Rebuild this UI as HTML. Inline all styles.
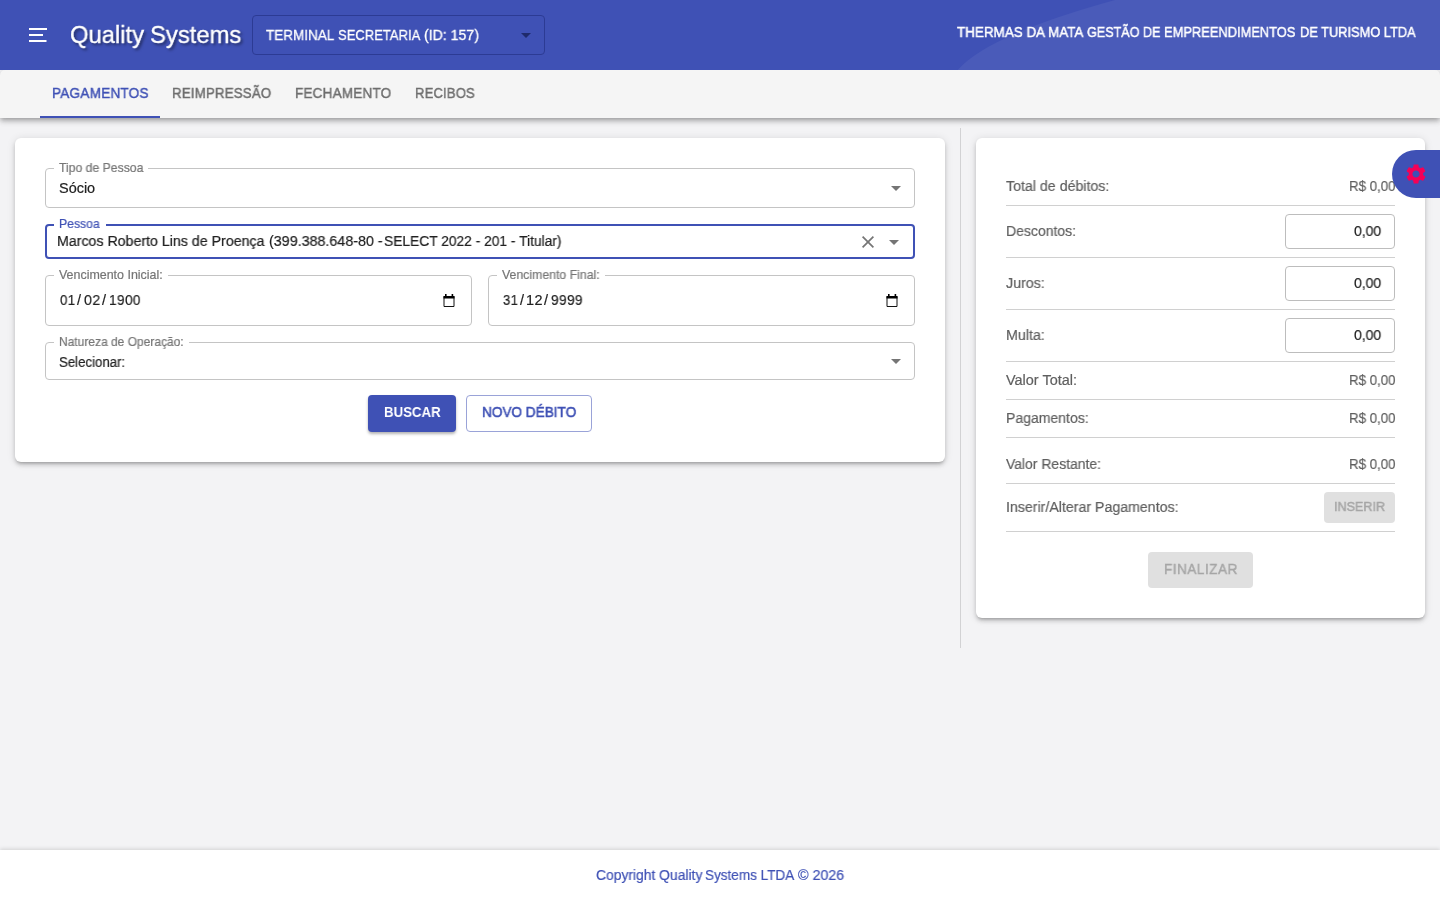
<!DOCTYPE html>
<html lang="pt-br">
<head>
<meta charset="utf-8">
<title>Quality Systems</title>
<style>
*{box-sizing:border-box;margin:0;padding:0}
html,body{width:1440px;height:900px;overflow:hidden}
body{font-family:"Liberation Sans",sans-serif;background:#f3f3f5;position:relative;color:#222}
.abs{position:absolute}
.t{position:absolute;white-space:nowrap;line-height:1;transform-origin:0 50%;will-change:transform}
/* header */
#hdr{left:0;top:0;width:1440px;height:70px;background:#3f51b5;overflow:hidden}
#term{left:252px;top:15px;width:293px;height:40px;border:1px solid #2c3b94;border-radius:4px}
/* tabs */
#tabs{clip-path:inset(0 0 -20px 0);left:0;top:70px;width:1440px;height:48px;background:#f5f5f5;border-radius:5px 5px 0 0;box-shadow:0 2px 4px -1px rgba(0,0,0,.2),0 4px 5px 0 rgba(0,0,0,.14),0 1px 10px 0 rgba(0,0,0,.12)}
#ink{left:40px;top:116px;width:120px;height:2px;background:#3f51b5}
/* cards */
.card{background:#fff;border-radius:6px;box-shadow:0 3px 3px -2px rgba(0,0,0,.2),0 3px 4px 0 rgba(0,0,0,.14),0 1px 8px 0 rgba(0,0,0,.12)}
.fld{border:1px solid #c4c4c4;border-radius:4px;background:#fff}
.line{height:1px;background:#d0d0d0;left:1006px;width:389px}
.inp{left:1285px;width:110px;height:34.7px;border:1px solid #bdbdbd;border-radius:4px;background:#fff}
.btn{border-radius:4px;text-align:center;font-size:14px}
</style>
</head>
<body>
<!-- header -->
<div id="hdr" class="abs">
  <svg class="abs" style="left:900px;top:0" width="540" height="70" viewBox="0 0 540 70"><path d="M215 0 Q88 35 57.7 70 L540 70 L540 0 Z" fill="#4a5bb9"/></svg>
  <svg class="abs" style="left:26px;top:23px" width="24" height="24" viewBox="0 0 24 24"><path d="M3 6h18M3 12h14M3 18h17.5" stroke="#fff" stroke-width="2" fill="none"/></svg>
  <div id="term" class="abs"></div>
  <svg class="abs" style="left:521px;top:33px" width="10" height="6" viewBox="0 0 10 6"><path d="M0 0h10L5 5z" fill="#1f2a6b"/></svg>
</div>
<!-- tabs -->
<div id="tabs" class="abs"></div>

<div id="ink" class="abs"></div>

<!-- left card -->
<div class="abs card" style="left:15px;top:138px;width:930px;height:324px"></div>
<div class="abs fld" style="left:45px;top:168px;width:870px;height:40px"></div>

<div class="abs" style="left:54px;top:167px;width:94px;height:3px;background:#fff"></div>
<div class="abs fld" style="left:45px;top:224px;width:870px;height:35px;border:2px solid #3f51b5"></div>

<div class="abs" style="left:54px;top:223px;width:52px;height:4px;background:#fff"></div>
<div class="abs fld" style="left:45px;top:275px;width:427px;height:51px"></div>

<div class="abs" style="left:54px;top:274px;width:114px;height:3px;background:#fff"></div>
<div class="abs fld" style="left:488px;top:275px;width:427px;height:51px"></div>

<div class="abs" style="left:497px;top:274px;width:108px;height:3px;background:#fff"></div>
<div class="abs fld" style="left:45px;top:342px;width:870px;height:38px"></div>

<div class="abs" style="left:54px;top:341px;width:135px;height:3px;background:#fff"></div>
<div class="abs btn" style="left:368px;top:395px;width:88px;height:37px;background:#3f51b5;box-shadow:0 2px 3px rgba(0,0,0,.3)"></div>

<div class="abs btn" style="left:466px;top:395px;width:126px;height:37px;border:1px solid #9aa3d8;background:#fff"></div>

<!-- divider -->
<div class="abs" style="left:960px;top:128px;width:1px;height:520px;background:#d2d2d4"></div>

<!-- right card -->
<div class="abs card" style="left:976px;top:138px;width:449px;height:480px"></div>

<div class="abs line" style="top:205px"></div>
<div class="abs inp" style="top:214px"></div>
<div class="abs line" style="top:257px"></div>
<div class="abs inp" style="top:266px"></div>
<div class="abs line" style="top:309px"></div>
<div class="abs inp" style="top:318px"></div>
<div class="abs line" style="top:361px"></div>

<div class="abs line" style="top:399px"></div>

<div class="abs line" style="top:437px"></div>

<div class="abs line" style="top:483px"></div>

<div class="abs btn" style="left:1324.2px;top:492.2px;width:70.8px;height:30.4px;background:#e0e0e0"></div>

<div class="abs line" style="top:531px"></div>
<div class="abs btn" style="left:1148px;top:552.2px;width:105px;height:35.4px;background:#e0e0e0"></div>

<!-- gear -->
<div class="abs" style="left:1392px;top:150px;width:60px;height:48px;background:#3f51b5;border-radius:24px 0 0 24px;z-index:5"></div>


<!-- icons -->
<svg class="abs" style="left:890px;top:185px" width="12" height="7" viewBox="0 0 12 7"><path d="M1 1h10L6 6z" fill="#757575"/></svg>
<svg class="abs" style="left:890px;top:358px" width="12" height="7" viewBox="0 0 12 7"><path d="M1 1h10L6 6z" fill="#757575"/></svg>
<svg class="abs" style="left:888px;top:239px" width="12" height="7" viewBox="0 0 12 7"><path d="M1 1h10L6 6z" fill="#757575"/></svg>
<svg class="abs" style="left:860px;top:234px" width="16" height="16" viewBox="0 0 16 16"><path d="M2.6 2.6L13.4 13.4M13.4 2.6L2.6 13.4" stroke="#757575" stroke-width="1.7" fill="none"/></svg>
<svg class="abs cal" style="left:442px;top:293px" width="14" height="15" viewBox="0 0 14 15"><path d="M2 3.5h10v10H2z" fill="none" stroke="#111" stroke-width="1" stroke-linejoin="round"/><path d="M1.5 3h11v2.6h-11z M3 1h1.6v2H3z M9.6 1h1.6v2H9.6z" fill="#000"/></svg>
<svg class="abs cal" style="left:885px;top:293px" width="14" height="15" viewBox="0 0 14 15"><path d="M2 3.5h10v10H2z" fill="none" stroke="#111" stroke-width="1" stroke-linejoin="round"/><path d="M1.5 3h11v2.6h-11z M3 1h1.6v2H3z M9.6 1h1.6v2H9.6z" fill="#000"/></svg>
<svg class="abs" style="left:1404px;top:162px;z-index:6" width="24" height="24" viewBox="0 0 24 24"><path fill="#f50057" d="M19.14 12.94c.04-.3.06-.61.06-.94 0-.32-.02-.64-.07-.94l2.03-1.58c.18-.14.23-.41.12-.61l-1.92-3.32c-.12-.22-.37-.29-.59-.22l-2.39.96c-.5-.38-1.03-.7-1.62-.94l-.36-2.54c-.04-.24-.24-.41-.48-.41h-3.84c-.24 0-.43.17-.47.41l-.36 2.54c-.59.24-1.13.57-1.62.94l-2.39-.96c-.22-.08-.47 0-.59.22L2.74 8.87c-.12.21-.08.47.12.61l2.03 1.58c-.05.3-.09.63-.09.94s.02.64.07.94l-2.03 1.58c-.18.14-.23.41-.12.61l1.92 3.32c.12.22.37.29.59.22l2.39-.96c.5.38 1.03.7 1.62.94l.36 2.54c.05.24.24.41.48.41h3.84c.24 0 .44-.17.47-.41l.36-2.54c.59-.24 1.13-.56 1.62-.94l2.39.96c.22.08.47 0 .59-.22l1.92-3.32c.12-.22.07-.47-.12-.61l-2.01-1.58zM12 15.6c-1.98 0-3.6-1.62-3.6-3.6s1.62-3.6 3.6-3.6 3.6 1.62 3.6 3.6-1.62 3.6-3.6 3.6z"/></svg>
<!-- footer -->
<div class="abs" style="left:0;top:850px;width:1440px;height:50px;background:#fff;box-shadow:0 -1px 4px rgba(0,0,0,.14)"></div>

<div class="t" id="title" style="left:69.71px;top:23.01px;font-size:24.79px;color:#fff;transform:scaleX(0.9604);text-shadow:2px 2px 3px rgba(0,0,0,.5);-webkit-text-stroke:.35px #fff;">Quality</div>
<div class="t" id="title2" style="left:149.61px;top:23.01px;font-size:24.79px;color:#fff;transform:scaleX(0.9618);text-shadow:2px 2px 3px rgba(0,0,0,.5);-webkit-text-stroke:.35px #fff;">Systems</div>
<div class="t" id="termtxt" style="left:265.62px;top:27.76px;font-size:14.46px;color:#fff;transform:scaleX(0.9340);-webkit-text-stroke:.3px #fff;">TERMINAL</div>
<div class="t" id="term2" style="left:338.32px;top:27.76px;font-size:14.46px;color:#fff;transform:scaleX(0.9010);-webkit-text-stroke:.3px #fff;">SECRETARIA</div>
<div class="t" id="term3" style="left:423.82px;top:27.76px;font-size:14.46px;color:#fff;transform:scaleX(0.9773);-webkit-text-stroke:.3px #fff;">(ID: 157)</div>
<div class="t" id="company" style="left:956.92px;top:24.96px;font-size:14.46px;color:#fff;transform:scaleX(0.9299);-webkit-text-stroke:.45px #fff;">THERMAS DA MATA</div>
<div class="t" id="c2" style="left:1087.42px;top:24.96px;font-size:14.46px;color:#fff;transform:scaleX(0.8711);-webkit-text-stroke:.45px #fff;">GESTÃO DE</div>
<div class="t" id="c3" style="left:1164.42px;top:24.96px;font-size:14.46px;color:#fff;transform:scaleX(0.8912);-webkit-text-stroke:.45px #fff;">EMPREENDIMENTOS</div>
<div class="t" id="c4" style="left:1300.22px;top:24.96px;font-size:14.46px;color:#fff;transform:scaleX(0.8871);-webkit-text-stroke:.45px #fff;">DE TURISMO LTDA</div>
<div class="t" id="tab1" style="left:51.72px;top:85.76px;font-size:14.46px;color:#3f51b5;letter-spacing:0.2px;transform:scaleX(0.9424);-webkit-text-stroke:.45px #3f51b5;">PAGAMENTOS</div>
<div class="t" id="tab2" style="left:172.12px;top:85.76px;font-size:14.46px;color:#6e6e6e;letter-spacing:0.2px;transform:scaleX(0.9180);-webkit-text-stroke:.45px #6e6e6e;">REIMPRESSÃO</div>
<div class="t" id="tab3" style="left:295.12px;top:85.76px;font-size:14.46px;color:#6e6e6e;letter-spacing:0.2px;transform:scaleX(0.9361);-webkit-text-stroke:.45px #6e6e6e;">FECHAMENTO</div>
<div class="t" id="tab4" style="left:415.12px;top:85.76px;font-size:14.46px;color:#6e6e6e;letter-spacing:0.2px;transform:scaleX(0.9017);-webkit-text-stroke:.45px #6e6e6e;">RECIBOS</div>
<div class="t" id="l1" style="left:58.80px;top:161.81px;font-size:12.40px;color:#757575;transform:scaleX(0.9854);-webkit-text-stroke:.2px #757575;">Tipo de Pessoa</div>
<div class="t" id="l2" style="left:58.80px;top:217.51px;font-size:12.40px;color:#3f51b5;transform:scaleX(0.9842);-webkit-text-stroke:.2px #3f51b5;">Pessoa</div>
<div class="t" id="l3" style="left:58.80px;top:268.81px;font-size:12.40px;color:#757575;transform:scaleX(1.0037);-webkit-text-stroke:.2px #757575;">Vencimento Inicial:</div>
<div class="t" id="l4" style="left:501.80px;top:268.81px;font-size:12.40px;color:#757575;transform:scaleX(0.9918);-webkit-text-stroke:.2px #757575;">Vencimento Final:</div>
<div class="t" id="l5" style="left:58.80px;top:335.51px;font-size:12.40px;color:#757575;transform:scaleX(0.9680);-webkit-text-stroke:.2px #757575;">Natureza de Operação:</div>
<div class="t" id="v1" style="left:58.72px;top:181.06px;font-size:14.46px;color:#212121;transform:scaleX(1.0000);-webkit-text-stroke:.2px #212121;">Sócio</div>
<div class="t" id="v2" style="left:56.72px;top:233.76px;font-size:14.46px;color:#212121;transform:scaleX(0.9818);-webkit-text-stroke:.2px #212121;">Marcos Roberto Lins de Proença</div>
<div class="t" id="v2b" style="left:268.52px;top:233.76px;font-size:14.46px;color:#212121;transform:scaleX(0.9891);-webkit-text-stroke:.2px #212121;">(399.388.648-80 -</div>
<div class="t" id="v2c" style="left:384.12px;top:233.76px;font-size:14.46px;color:#212121;transform:scaleX(0.9535);-webkit-text-stroke:.2px #212121;">SELECT 2022 - 201 - Titular)</div>
<div class="t" id="v3" style="left:59.72px;top:293.06px;font-size:14.46px;color:#212121;letter-spacing:0.4px;transform:scaleX(0.9131);-webkit-text-stroke:.2px #212121;">01</div>
<div class="t" id="v3s1" style="left:77.42px;top:293.06px;font-size:14.46px;color:#212121;transform:scaleX(1.0000);-webkit-text-stroke:.2px #212121;">/</div>
<div class="t" id="v3b" style="left:83.62px;top:293.06px;font-size:14.46px;color:#212121;letter-spacing:0.4px;transform:scaleX(0.9798);-webkit-text-stroke:.2px #212121;">02</div>
<div class="t" id="v3s2" style="left:101.62px;top:293.06px;font-size:14.46px;color:#212121;transform:scaleX(1.0000);-webkit-text-stroke:.2px #212121;">/</div>
<div class="t" id="v3c" style="left:108.62px;top:293.06px;font-size:14.46px;color:#212121;letter-spacing:0.4px;transform:scaleX(0.9428);-webkit-text-stroke:.2px #212121;">1900</div>
<div class="t" id="v4" style="left:502.72px;top:293.06px;font-size:14.46px;color:#212121;letter-spacing:0.4px;transform:scaleX(0.9009);-webkit-text-stroke:.2px #212121;">31</div>
<div class="t" id="v4s1" style="left:520.12px;top:293.06px;font-size:14.46px;color:#212121;transform:scaleX(1.0000);-webkit-text-stroke:.2px #212121;">/</div>
<div class="t" id="v4b" style="left:526.32px;top:293.06px;font-size:14.46px;color:#212121;letter-spacing:0.4px;transform:scaleX(0.9798);-webkit-text-stroke:.2px #212121;">12</div>
<div class="t" id="v4s2" style="left:544.32px;top:293.06px;font-size:14.46px;color:#212121;transform:scaleX(1.0000);-webkit-text-stroke:.2px #212121;">/</div>
<div class="t" id="v4c" style="left:551.32px;top:293.06px;font-size:14.46px;color:#212121;letter-spacing:0.4px;transform:scaleX(0.9458);-webkit-text-stroke:.2px #212121;">9999</div>
<div class="t" id="v5" style="left:58.75px;top:356.04px;font-size:13.77px;color:#212121;transform:scaleX(0.9597);-webkit-text-stroke:.2px #212121;">Selecionar:</div>
<div class="t" id="b1" style="left:383.72px;top:405.06px;font-size:14.46px;color:#fff;font-weight:bold;transform:scaleX(0.9147);">BUSCAR</div>
<div class="t" id="b2" style="left:482.12px;top:405.06px;font-size:14.46px;color:#3f51b5;transform:scaleX(0.9404);-webkit-text-stroke:.55px #3f51b5;">NOVO DÉBITO</div>
<div class="t" id="r1" style="left:1006.12px;top:178.86px;font-size:14.46px;color:#5f5f5f;transform:scaleX(0.9819);-webkit-text-stroke:.2px #5f5f5f;">Total de débitos:</div>
<div class="t" id="r2" style="left:1006.12px;top:223.96px;font-size:14.46px;color:#5f5f5f;transform:scaleX(0.9688);-webkit-text-stroke:.2px #5f5f5f;">Descontos:</div>
<div class="t" id="r3" style="left:1006.12px;top:275.96px;font-size:14.46px;color:#5f5f5f;transform:scaleX(0.9872);-webkit-text-stroke:.2px #5f5f5f;">Juros:</div>
<div class="t" id="r4" style="left:1006.12px;top:327.76px;font-size:14.46px;color:#5f5f5f;transform:scaleX(0.9872);-webkit-text-stroke:.2px #5f5f5f;">Multa:</div>
<div class="t" id="r5" style="left:1005.62px;top:372.66px;font-size:14.46px;color:#5f5f5f;transform:scaleX(0.9998);-webkit-text-stroke:.2px #5f5f5f;">Valor Total:</div>
<div class="t" id="r6" style="left:1006.12px;top:410.86px;font-size:14.46px;color:#5f5f5f;transform:scaleX(0.9705);-webkit-text-stroke:.2px #5f5f5f;">Pagamentos:</div>
<div class="t" id="r7" style="left:1005.62px;top:456.86px;font-size:14.46px;color:#5f5f5f;transform:scaleX(0.9636);-webkit-text-stroke:.2px #5f5f5f;">Valor Restante:</div>
<div class="t" id="r8" style="left:1006.12px;top:499.96px;font-size:14.46px;color:#5f5f5f;transform:scaleX(0.9803);-webkit-text-stroke:.2px #5f5f5f;">Inserir/Alterar Pagamentos:</div>
<div class="t" id="x1" style="left:1348.72px;top:178.76px;font-size:14.46px;color:#5f5f5f;transform:scaleX(0.9196);-webkit-text-stroke:.2px #5f5f5f;">R$ 0,00</div>
<div class="t" id="x2" style="left:1353.82px;top:223.76px;font-size:14.46px;color:#212121;transform:scaleX(0.9686);-webkit-text-stroke:.2px #212121;">0,00</div>
<div class="t" id="x3" style="left:1353.82px;top:275.76px;font-size:14.46px;color:#212121;transform:scaleX(0.9686);-webkit-text-stroke:.2px #212121;">0,00</div>
<div class="t" id="x4" style="left:1353.82px;top:327.76px;font-size:14.46px;color:#212121;transform:scaleX(0.9686);-webkit-text-stroke:.2px #212121;">0,00</div>
<div class="t" id="x5" style="left:1348.72px;top:372.66px;font-size:14.46px;color:#5f5f5f;transform:scaleX(0.9196);-webkit-text-stroke:.2px #5f5f5f;">R$ 0,00</div>
<div class="t" id="x6" style="left:1348.72px;top:410.86px;font-size:14.46px;color:#5f5f5f;transform:scaleX(0.9196);-webkit-text-stroke:.2px #5f5f5f;">R$ 0,00</div>
<div class="t" id="x7" style="left:1348.72px;top:456.86px;font-size:14.46px;color:#5f5f5f;transform:scaleX(0.9196);-webkit-text-stroke:.2px #5f5f5f;">R$ 0,00</div>
<div class="t" id="b3" style="left:1334.16px;top:499.83px;font-size:13.43px;color:#a6a6a6;transform:scaleX(0.9380);-webkit-text-stroke:.5px #a6a6a6;">INSERIR</div>
<div class="t" id="b4" style="left:1163.82px;top:561.96px;font-size:14.46px;color:#a6a6a6;letter-spacing:0.6px;transform:scaleX(0.9321);-webkit-text-stroke:.45px #a6a6a6;">FINALIZAR</div>
<div class="t" id="foot" style="left:595.72px;top:867.76px;font-size:14.46px;color:#3f51b5;transform:scaleX(0.9594);-webkit-text-stroke:.2px #3f51b5;">Copyright Quality</div>
<div class="t" id="f2" style="left:705.42px;top:867.76px;font-size:14.46px;color:#3f51b5;transform:scaleX(0.9354);-webkit-text-stroke:.2px #3f51b5;">Systems LTDA</div>
<div class="t" id="f3" style="left:798.42px;top:867.76px;font-size:14.46px;color:#3f51b5;transform:scaleX(0.9857);-webkit-text-stroke:.2px #3f51b5;">© 2026</div>
</body>
</html>
